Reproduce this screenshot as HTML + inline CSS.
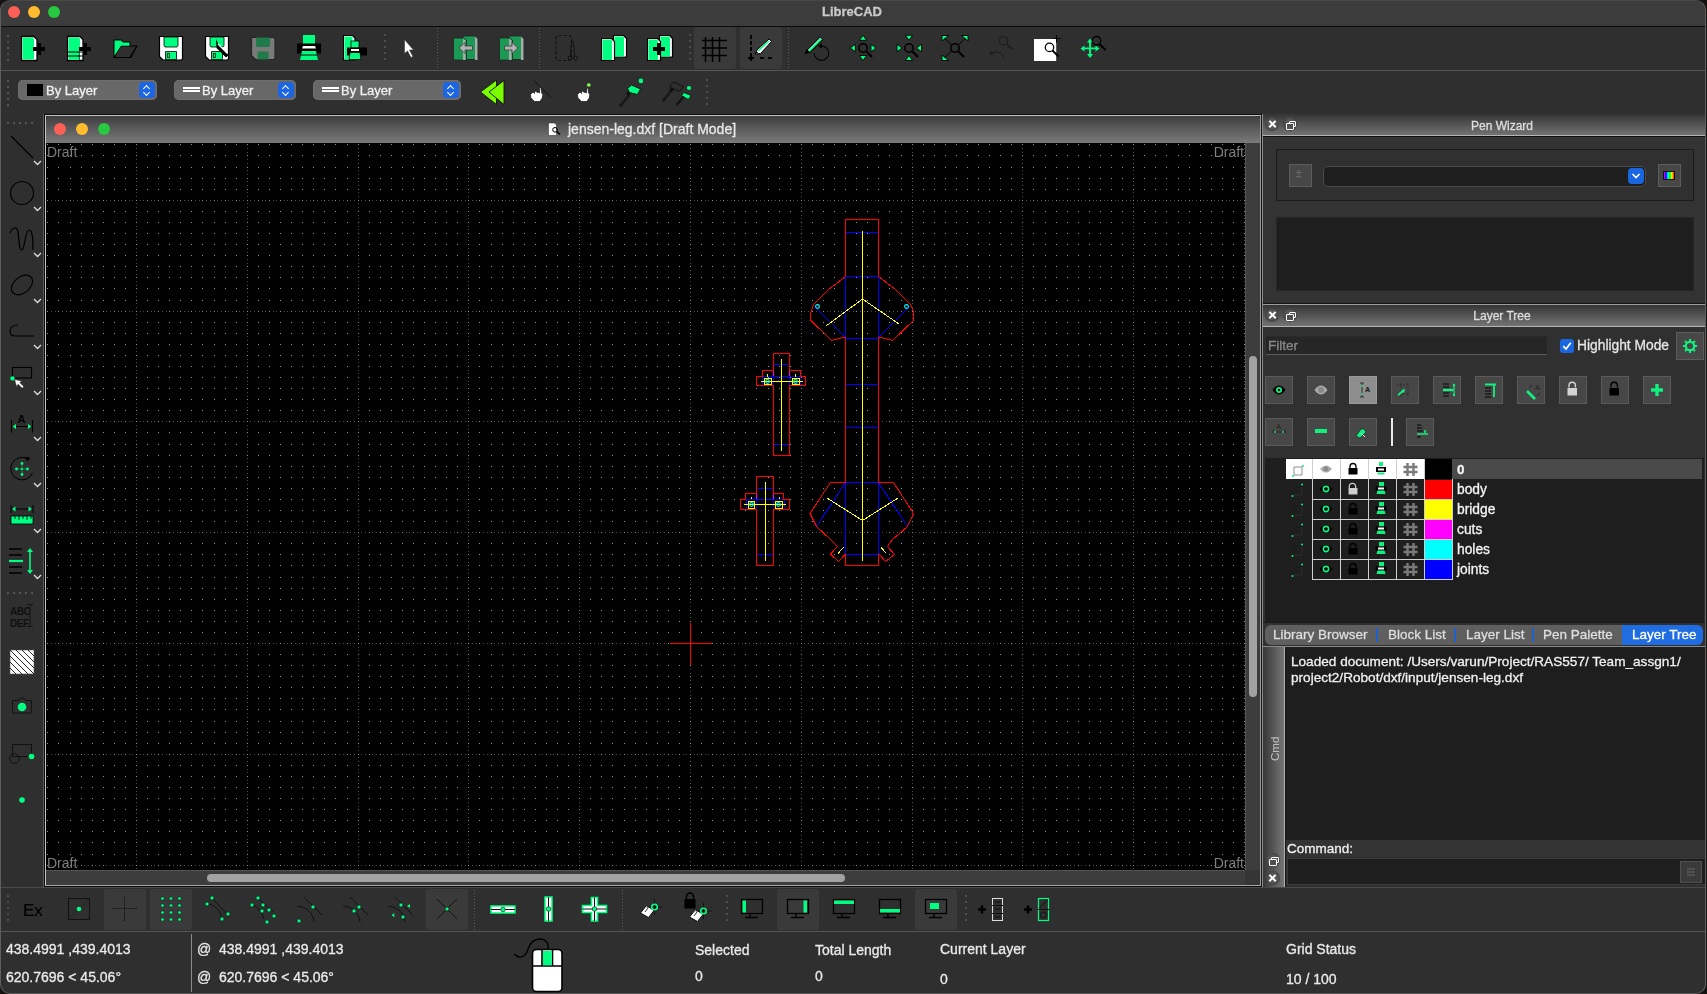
<!DOCTYPE html>
<html><head><meta charset="utf-8">
<style>
*{box-sizing:border-box}
html,body{margin:0;padding:0}
body{width:1707px;height:994px;overflow:hidden;background:#2f2f2f;font-family:"Liberation Sans",sans-serif;position:relative;color:#e6e6e6}
.a{position:absolute}
.t{position:absolute;white-space:nowrap;line-height:1;will-change:transform;-webkit-text-stroke:0.3px}
svg{position:absolute;overflow:visible}
.cb,.fb{width:14px;height:14px;border-radius:50%;background:radial-gradient(circle,#5c5c5c 0,#535353 50%,#3e3e3e 72%,rgba(60,60,60,0) 76%)}
.cb::before,.cb::after{content:"";position:absolute;left:2.5px;top:6px;width:9px;height:2.2px;background:#fff;transform:rotate(45deg)}
.cb::after{transform:rotate(-45deg)}
.fb::before{content:"";position:absolute;left:5.5px;top:3.5px;width:5.5px;height:4.5px;border:1.3px solid #fff;border-radius:1px}
.fb::after{content:"";position:absolute;left:3px;top:6px;width:6px;height:4.8px;border:1.3px solid #fff;background:#505050;border-radius:1px}
.lb{width:28px;height:28px;background:#474747;border:1px solid #5a5a5a}
.cmb{height:20px;background:#686868;border-radius:5px;box-shadow:inset 0 0 0 0.5px #757575}
.stp{width:16px;height:16px;background:#1d66e0;border-radius:4px}
.stp::before{content:"";position:absolute;left:5px;top:3.5px;width:4px;height:4px;border-left:1.5px solid #fff;border-top:1.5px solid #fff;transform:rotate(45deg)}
.stp::after{content:"";position:absolute;left:5px;top:7.5px;width:4px;height:4px;border-right:1.5px solid #fff;border-bottom:1.5px solid #fff;transform:rotate(45deg)}
.st{font-size:14px;color:#eaeaea}

</style></head><body>

<!-- main window title bar -->
<div class="a" style="left:0;top:0;width:1707px;height:26px;background:#3c3c3c;border-radius:10px 10px 0 0"></div>
<div class="a" style="left:0;top:26px;width:1707px;height:1px;background:#0c0c0c"></div>
<div class="a" style="left:8px;top:6px;width:12px;height:12px;border-radius:50%;background:#fe5f57"></div>
<div class="a" style="left:28px;top:6px;width:12px;height:12px;border-radius:50%;background:#febc2e"></div>
<div class="a" style="left:48px;top:6px;width:12px;height:12px;border-radius:50%;background:#28c840"></div>
<div class="t" style="left:822px;top:5px;font-size:13px;font-weight:bold;color:#c9c9c9">LibreCAD</div>

<!--TOP-->
<!-- TOP TOOLBARS -->
<svg style="left:0;top:0" width="1707" height="113" viewBox="0 0 1707 113">
<defs>
<g id="hdl" fill="#555"><rect x="7" y="0" width="2" height="2"/><rect x="7" y="6" width="2" height="2"/><rect x="7" y="12" width="2" height="2"/><rect x="7" y="18" width="2" height="2"/><rect x="7" y="24" width="2" height="2"/></g>
<g id="dsep" fill="#4e4e4e"><rect x="0" y="0" width="2" height="2"/><rect x="0" y="6" width="2" height="2"/><rect x="0" y="12" width="2" height="2"/><rect x="0" y="18" width="2" height="2"/><rect x="0" y="24" width="2" height="2"/></g>
<g id="doc"><path d="M21.5 36.5h12.5l3 3v21h-15.5z" fill="#fff" stroke="#000" stroke-width="1.3"/><path d="M22.5 37.5h10.5l1 1.5v20.5h-11.5z" fill="#00ff80"/></g>
<g id="plus" fill="#000"><rect x="33" y="47" width="12" height="4"/><rect x="38" y="43" width="3" height="12"/></g>
<g id="floppy"><path d="M159.5 36.5h23v22.5l-1 1h-18.5l-3.5-3.5z" fill="#fff" stroke="#000" stroke-width="1.2"/><path d="M164 37h14v8.5l-1 1.5h-12l-1-1.5z" fill="#00ff80" stroke="#000" stroke-width="0.8"/><path d="M165.5 51.5h11v8h-11z" fill="#00ff80" stroke="#000" stroke-width="0.8"/><rect x="167.3" y="53.5" width="2" height="4" fill="none" stroke="#000" stroke-width="0.8"/></g>
<g id="gridic" stroke="#000" stroke-width="1.5"><path d="M702 40.5h25M702 48h25M702 55.5h25M705.5 37v25M712.5 37v25M719.5 37v25"/></g>
</defs>
<use href="#hdl" y="35"/>
<use href="#hdl" y="80"/>
<!-- new -->
<use href="#doc"/><use href="#plus"/>
<!-- new from template -->
<g transform="translate(46 0)"><use href="#doc"/><path d="M22 52h14.5M22 56h14.5M33 52v8" stroke="#000" stroke-width="1"/><path d="M23 53h10v2h-10zM23 57h10v2.8h-10z" fill="#00ff80"/><use href="#plus"/></g>
<!-- open -->
<path d="M113.5 39.5h8l2 2h7v4h7.5l-7 12.5h-17.5z" fill="#000"/><path d="M114.5 40.5h6.5l2 2h6.5v3.3h-8.5l-6.5 10z" fill="#00ff80"/><path d="M121 46.5h15l-6.5 10.5h-14.5z" fill="#2f2f2f"/>
<!-- save -->
<use href="#floppy"/>
<g transform="translate(46 0)"><use href="#floppy"/><path d="M170 39l3 6.5l9.5 9.5l-2.5 2.5l-9.5-9.5z" fill="#000"/><path d="M172 44l9 9" stroke="#fff" stroke-width="1.2"/></g>
<g transform="translate(92 0)" opacity="0.7"><path d="M159.5 37.5h22l1.5 1.5v19.5l-1 1h-18.5l-4-4z" fill="#9a9a9a" stroke="#222" stroke-width="1.2"/><path d="M164 37.5h14v8l-1 1.5h-12l-1-1.5z" fill="#1a9a55"/><path d="M165.5 51.5h11v8h-11z" fill="#1a9a55"/></g>
<!-- print -->
<rect x="303" y="35" width="12" height="9" fill="#00ff80"/><rect x="297" y="43.5" width="24" height="10" fill="#000"/><path d="M303 46h12l1 2.5h-14z" fill="#fff"/><path d="M302 51h14l2 9h-18z" fill="#00ff80"/><path d="M300.5 55h17" stroke="#000" stroke-width="1"/>
<!-- print preview -->
<path d="M343.5 35.5h9l2.5 2.5v22h-11.5z" fill="#fff" stroke="#000" stroke-width="1.2"/><path d="M344.5 36.5h8v23h-8z" fill="#00ff80"/>
<rect x="351" y="41" width="8" height="7" fill="#00ff80" stroke="#000" stroke-width="0.8"/><rect x="347" y="47.5" width="20" height="8" fill="#000"/><path d="M351 49h8v2h-8z" fill="#fff"/><path d="M350 52.5h10l1 7h-12z" fill="#00ff80" stroke="#000" stroke-width="0.8"/>
<use href="#dsep" x="384" y="34"/>
<!-- pointer -->
<path d="M404.5 39.5v14l3-2.5l3.5 6.5l2-1l-3.5-6.5h4z" fill="#fff" stroke="#333" stroke-width="0.6"/>
<path d="M437.5 28v41" stroke="#5a5a5a" stroke-dasharray="1 2"/>
<!-- prev/next window -->
<g><path d="M463 36h12l2.5 2.5v21h-14.5z" fill="#1b9a55" stroke="#222" stroke-width="0.8"/><path d="M475 36.5l2.5 2.5v21h-2.5z" fill="#aaa"/><path d="M453.5 38h10l3 2v20h-13z" fill="#1b9a55" stroke="#222" stroke-width="0.8"/><path d="M463 38.5l2.5 2v19.5h-2.5z" fill="#aaa"/><path d="M459 48l6-5.5v3.5h7.5v4h-7.5v3.5z" fill="#b0b0b0" stroke="#333" stroke-width="0.7"/></g>
<g transform="translate(46 0)"><path d="M463 36h12l2.5 2.5v21h-14.5z" fill="#1b9a55" stroke="#222" stroke-width="0.8"/><path d="M475 36.5l2.5 2.5v21h-2.5z" fill="#aaa"/><path d="M453.5 38h10l3 2v20h-13z" fill="#1b9a55" stroke="#222" stroke-width="0.8"/><path d="M463 38.5l2.5 2v19.5h-2.5z" fill="#aaa"/><path d="M472 48l-6-5.5v3.5h-7.5v4h7.5v3.5z" fill="#b0b0b0" stroke="#333" stroke-width="0.7"/></g>
<path d="M539.5 28v41" stroke="#5a5a5a" stroke-dasharray="1 2"/>
<!-- cut -->
<rect x="556" y="35.5" width="15.5" height="25" rx="3" fill="none" stroke="#111" stroke-width="1.2" stroke-dasharray="3 2"/>
<path d="M572 41l-1.5 9M573 41l1.5 9" stroke="#111" stroke-width="0.9"/><circle cx="570" cy="58" r="2" fill="none" stroke="#111" stroke-width="1"/><circle cx="575.5" cy="58" r="2" fill="none" stroke="#111" stroke-width="1"/><path d="M571 50l-0.5 6M574 50l0.5 6" stroke="#111" stroke-width="0.9"/>
<!-- copy -->
<g><path d="M613.5 35.5h10l3 3v18.5h-13z" fill="#fff" stroke="#000" stroke-width="1.2"/><path d="M614.5 36.5h8.5l1 1.5v18.5h-9.5z" fill="#00ff80"/><path d="M601.5 38.5h10l3 3v19h-13z" fill="#fff" stroke="#000" stroke-width="1.2"/><path d="M602.5 39.5h8.5l1 1.5v19h-9.5z" fill="#00ff80"/></g>
<!-- paste -->
<g transform="translate(46 0)"><path d="M613.5 35.5h10l3 3v18.5h-13z" fill="#fff" stroke="#000" stroke-width="1.2"/><path d="M614.5 36.5h8.5l1 1.5v18.5h-9.5z" fill="#00ff80"/><path d="M601.5 38.5h10l3 3v19h-13z" fill="#fff" stroke="#000" stroke-width="1.2"/><path d="M602.5 39.5h8.5l1 1.5v19h-9.5z" fill="#00ff80"/><rect x="607" y="47" width="12" height="4" fill="#000"/><rect x="611" y="43" width="4" height="12" fill="#000"/></g>
<use href="#dsep" x="689" y="34"/>
<!-- checked grid + draft -->
<rect x="694" y="27" width="42" height="42" rx="3" fill="#3a3a3a"/>
<rect x="740" y="27" width="42" height="42" rx="3" fill="#3a3a3a"/>
<use href="#gridic"/>
<path d="M751 35v25M750 58h5M760 58h4M768 58h6" stroke="#000" stroke-width="1.8" stroke-dasharray="4 2"/>
<path d="M748 58h6M751 55v6" stroke="#000" stroke-width="1.8"/>
<path d="M755 54l2-4l12-11l2.5 2.5l-11 12z" fill="#fff" stroke="#000" stroke-width="1"/><path d="M758 51l11-10" stroke="#00ff80" stroke-width="1.6"/><path d="M755 54l1.5-3l1.5 1.5z" fill="#000"/>
<path d="M788.5 28v41" stroke="#5a5a5a" stroke-dasharray="1 2"/>
<!-- redraw -->
<path d="M814.3 53A7.2 7.2 0 1 0 821.5 46" fill="none" stroke="#000" stroke-width="1.1"/><path d="M818 46l4-2.8v5.6z" fill="#000"/>
<path d="M808.5 51.5l13-13" stroke="#000" stroke-width="4.4"/><path d="M808.8 51.2l12.5-12.5" stroke="#00ff80" stroke-width="2.4"/><path d="M808 50.5l12.5-12.5" stroke="#fff" stroke-width="0.9"/><path d="M804.5 54.5l2-5.5l3.5 3.5z" fill="#000"/>
<!-- zoom in -->
<g stroke="#000" stroke-width="1.6" fill="none"><circle cx="863" cy="48" r="4.2"/><circle cx="909" cy="48" r="4.2"/><circle cx="955" cy="48" r="4.2"/></g>
<path d="M866.5 51.5l5.5 5.5M912.5 51.5l5.5 5.5M958.5 51.5l5.5 5.5" stroke="#000" stroke-width="2.2"/>
<g fill="#00ff80" stroke="#000" stroke-width="0.9" stroke-linejoin="miter">
<path d="M863 35.3l-3.6 5h7.2zM863 60.5l-3.6-5h7.2zM850.3 48l5-3.8v7.6zM876 48l-5-3.8v7.6z"/>
<path d="M909 40.3l-3.6-5h7.2zM909 55.5l-3.6 5h7.2zM902 48l-5-3.8v7.6zM916.5 48l5-3.8v7.6z"/>
<path d="M942 35.5h6.5l-6.5 5.5zM968 35.5h-6.5l6.5 5.5zM942 60.5h6.5l-6.5-5.5z"/>
</g>
<path d="M945 38.5l6.5 6.5M965 38.5l-6.5 6.5M945 57.5l6.5-6.5" stroke="#000" stroke-width="1"/>
<!-- zoom prev -->
<g stroke="#1e1e1e" fill="none"><circle cx="1003.6" cy="40.7" r="4.2" stroke-width="1.1"/><path d="M1006.8 44l5.5 5.5" stroke-width="1.8"/><path d="M1003.4 58.5A7 7 0 0 0 991 54.5" stroke-width="1.1"/></g><path d="M989 55l1.5-4.5l3 3.5z" fill="#1e1e1e"/>
<!-- zoom window -->
<rect x="1034" y="39" width="22.2" height="22" fill="#fff"/><circle cx="1049.5" cy="47.4" r="4.2" fill="none" stroke="#000" stroke-width="1.3"/><path d="M1052.5 50.5l6 6" stroke="#000" stroke-width="2"/><path d="M1056.5 35v7.5M1053 38.5h7.5" stroke="#000" stroke-width="1"/>
<!-- zoom pan -->
<path d="M1090 41v15M1083 48.4h14" stroke="#00ff80" stroke-width="1.8"/><path d="M1090 38.5l-3 4h6zM1090 58l-3-4h6zM1080.5 48.4l4-3v6zM1099.5 48.4l-4-3v6z" fill="#00ff80"/>
<circle cx="1096.5" cy="40.7" r="4.2" fill="none" stroke="#000" stroke-width="1.3"/><path d="M1099.5 44l6 6" stroke="#000" stroke-width="1.9"/>
<!-- row 2 -->
<path d="M0 70.5h1707" stroke="#545454"/>
</svg>
<!-- combos -->
<div class="a cmb" style="left:18px;top:80px;width:139px"></div>
<div class="a" style="left:27px;top:84px;width:16px;height:12px;background:#000"></div>
<div class="t" style="left:46px;top:84px;font-size:13px;color:#f0f0f0">By Layer</div>
<div class="a stp" style="left:139px;top:82px"></div>
<div class="a cmb" style="left:174px;top:80px;width:122px"></div>
<div class="a" style="left:183px;top:87px;width:17px;height:2px;background:#fff"></div><div class="a" style="left:183px;top:90px;width:17px;height:2px;background:#fff"></div>
<div class="t" style="left:202px;top:84px;font-size:13px;color:#f0f0f0">By Layer</div>
<div class="a stp" style="left:278px;top:82px"></div>
<div class="a cmb" style="left:313px;top:80px;width:148px"></div>
<div class="a" style="left:322px;top:87px;width:17px;height:2px;background:#fff"></div><div class="a" style="left:322px;top:90px;width:17px;height:2px;background:#fff"></div>
<div class="t" style="left:341px;top:84px;font-size:13px;color:#f0f0f0">By Layer</div>
<div class="a stp" style="left:443px;top:82px"></div>
<svg style="left:0;top:70px" width="720" height="43" viewBox="0 70 720 43">
<!-- green double arrow -->
<path d="M480.5 92L496.5 80v24.5z" fill="#7cfc00" stroke="#111" stroke-width="0.9" stroke-linejoin="miter"/><path d="M489 92L504 80.5v24z" fill="#7cfc00" stroke="#111" stroke-width="0.9"/>
<!-- hand icons -->
<g id="hand"><path d="M530.5 94.5l2.5-2.5l1.5 1.5v-2.5l2 0.5l0.5 1l1-0.5l1.5 1l0.2-5.5l1.3-0.5l0.6 6l1.2 1.5l-0.5 3.5l-2.5 3.5h-5.5l-3.5-4z" fill="#fff" stroke="#222" stroke-width="0.8" stroke-linejoin="round"/></g>
<path d="M533.3 80.2l17.6 17.1" stroke="#111" stroke-width="1"/>
<use href="#hand" x="47"/><path d="M586.5 89.5l2.3-4" stroke="#111" stroke-width="0.8"/><circle cx="588.8" cy="85" r="2.1" fill="#7cff4a" stroke="#333" stroke-width="0.5"/>
<!-- brush -->
<path d="M620.5 105.5l8.5-10" stroke="#111" stroke-width="2.6" stroke-linecap="round"/><path d="M621.2 104.6l7.5-8.8" stroke="#2f2f2f" stroke-width="0.8"/><path d="M626 94l2-3.5l3 2l-2.5 3z" fill="#111"/>
<path d="M627.5 88.5l4-3.5l9 4l-3 5.5l-8-2z" fill="#00ff80" stroke="#111" stroke-width="0.9"/><circle cx="640.9" cy="80.9" r="2.3" fill="#00ff80"/>
<path d="M663.5 100.5l7-9" stroke="#111" stroke-width="2.4" stroke-linecap="round"/><path d="M664.2 99.6l6-7.8" stroke="#2f2f2f" stroke-width="0.7"/><path d="M669.5 87l4-5l10 4.5l-4 5z" fill="#2f2f2f" stroke="#111" stroke-width="1"/><path d="M669 90l2-2.5l3 2l-2 2.5z" fill="#111"/>
<path d="M677 104.5l6-7" stroke="#111" stroke-width="2.2" stroke-linecap="round"/><path d="M681.5 95.5l2.5-3l7 3l-2.5 4z" fill="#00ff80" stroke="#111" stroke-width="0.8"/><circle cx="689" cy="88" r="2.1" fill="#00ff80"/>
<use href="#dsep" x="706" y="79"/>
</svg>

<!--/TOP-->

<!-- MDI area -->
<div class="a" style="left:43px;top:114px;width:1px;height:773px;background:#5a5a5a"></div>
<div class="a" style="left:44px;top:114px;width:1218px;height:773px;background:#0c0c0c"></div>
<!-- MDI window -->
<div class="a" style="left:45px;top:115px;width:1216px;height:771px;background:#2c2c2c;border:1px solid #c4c4c4;border-right-color:#9a9a9a;border-bottom-color:#a4a4a4"></div>
<div class="a" style="left:46px;top:116px;width:1214px;height:27px;background:linear-gradient(#3e3e3e,#7a7a7a);border-radius:4px 4px 0 0"></div>
<div class="a" style="left:54px;top:123px;width:12px;height:12px;border-radius:50%;background:#fe5f57"></div>
<div class="a" style="left:76px;top:123px;width:12px;height:12px;border-radius:50%;background:#febc2e"></div>
<div class="a" style="left:98px;top:123px;width:12px;height:12px;border-radius:50%;background:#28c840"></div>
<div class="t" style="left:568px;top:122px;font-size:14px;color:#e8e8e8">jensen-leg.dxf [Draft Mode]</div>
<svg style="left:546px;top:121px" width="20" height="18" viewBox="546 121 20 18"><path d="M548.5 123h6l2 2v10.5h-8z" fill="#fff" stroke="#222" stroke-width="0.5"/><circle cx="555" cy="129.8" r="2.3" fill="none" stroke="#000" stroke-width="1"/><path d="M556.6 131.5l3.5 3" stroke="#000" stroke-width="1.6"/></svg>

<!-- canvas -->
<div class="a" id="canvas" style="left:46px;top:143px;width:1199px;height:727px;background:#000;overflow:hidden"></div>
<!--GRID-->
<svg class="a" style="left:46px;top:143px" width="1199" height="727" viewBox="46 143 1199 727" shape-rendering="crispEdges">
<defs><path id="gr" d="M47 0h1m10 0h1m11 0h1m10 0h1m10 0h1m10 0h1m10 0h1m10 0h1m10 0h1m10 0h1m10 0h1m10 0h1m10 0h1m10 0h1m10 0h1m11 0h1m10 0h1m10 0h1m10 0h1m10 0h1m10 0h1m10 0h1m10 0h1m10 0h1m10 0h1m10 0h1m10 0h1m11 0h1m10 0h1m10 0h1m10 0h1m10 0h1m10 0h1m10 0h1m10 0h1m10 0h1m10 0h1m10 0h1m10 0h1m10 0h1m11 0h1m10 0h1m10 0h1m10 0h1m10 0h1m10 0h1m10 0h1m10 0h1m10 0h1m10 0h1m10 0h1m10 0h1m11 0h1m10 0h1m10 0h1m10 0h1m10 0h1m10 0h1m10 0h1m10 0h1m10 0h1m10 0h1m10 0h1m10 0h1m10 0h1m11 0h1m10 0h1m10 0h1m10 0h1m10 0h1m10 0h1m10 0h1m10 0h1m10 0h1m10 0h1m10 0h1m10 0h1m11 0h1m10 0h1m10 0h1m10 0h1m10 0h1m10 0h1m10 0h1m10 0h1m10 0h1m10 0h1m10 0h1m10 0h1m10 0h1m11 0h1m10 0h1m10 0h1m10 0h1m10 0h1m10 0h1m10 0h1m10 0h1m10 0h1m10 0h1m10 0h1m10 0h1m11 0h1m10 0h1m10 0h1m10 0h1m10 0h1m10 0h1m10 0h1" stroke="#959595" stroke-width="1"/>
<path id="sr" d="M51 0h1m3 0h1m6 0h1m3 0h1m6 0h1m3 0h1m6 0h1m3 0h1m6 0h1m3 0h1m6 0h1m3 0h1m7 0h1m2 0h1m7 0h1m2 0h1m7 0h1m2 0h1m7 0h1m2 0h1m7 0h1m3 0h1m6 0h1m3 0h1m6 0h1m3 0h1m6 0h1m3 0h1m6 0h1m3 0h1m6 0h1m3 0h1m6 0h1m3 0h1m6 0h1m3 0h1m6 0h1m3 0h1m7 0h1m2 0h1m7 0h1m2 0h1m7 0h1m2 0h1m7 0h1m3 0h1m6 0h1m3 0h1m6 0h1m3 0h1m6 0h1m3 0h1m6 0h1m3 0h1m6 0h1m3 0h1m6 0h1m3 0h1m6 0h1m3 0h1m6 0h1m3 0h1m7 0h1m2 0h1m7 0h1m2 0h1m7 0h1m2 0h1m7 0h1m2 0h1m7 0h1m3 0h1m6 0h1m3 0h1m6 0h1m3 0h1m6 0h1m3 0h1m6 0h1m3 0h1m6 0h1m3 0h1m6 0h1m3 0h1m6 0h1m3 0h1m6 0h1m3 0h1m7 0h1m2 0h1m7 0h1m2 0h1m7 0h1m2 0h1m7 0h1m3 0h1m6 0h1m3 0h1m6 0h1m3 0h1m6 0h1m3 0h1m6 0h1m3 0h1m6 0h1m3 0h1m6 0h1m3 0h1m6 0h1m3 0h1m6 0h1m3 0h1m7 0h1m2 0h1m7 0h1m2 0h1m7 0h1m2 0h1m7 0h1m2 0h1m7 0h1m3 0h1m6 0h1m3 0h1m6 0h1m3 0h1m6 0h1m3 0h1m6 0h1m3 0h1m6 0h1m3 0h1m6 0h1m3 0h1m6 0h1m3 0h1m6 0h1m3 0h1m7 0h1m2 0h1m7 0h1m2 0h1m7 0h1m2 0h1m7 0h1m3 0h1m6 0h1m3 0h1m6 0h1m3 0h1m6 0h1m3 0h1m6 0h1m3 0h1m6 0h1m3 0h1m6 0h1m3 0h1m6 0h1m3 0h1m6 0h1m3 0h1m7 0h1m2 0h1m7 0h1m2 0h1m7 0h1m2 0h1m7 0h1m2 0h1m7 0h1m3 0h1m6 0h1m3 0h1m6 0h1m3 0h1m6 0h1m3 0h1m6 0h1m3 0h1m6 0h1m3 0h1m6 0h1m3 0h1m6 0h1m3 0h1m6 0h1m3 0h1m7 0h1m2 0h1m7 0h1m2 0h1m7 0h1m2 0h1m7 0h1m3 0h1m6 0h1m3 0h1m6 0h1m3 0h1m6 0h1m3 0h1m6 0h1m3 0h1m6 0h1m3 0h1m6 0h1m3 0h1m6 0h1m3 0h1m6 0h1m3 0h1m7 0h1m2 0h1m7 0h1m2 0h1" stroke="#4a4a4a" stroke-width="1"/>
<path id="sc" d="M0 148v1m0 3v1m0 6v1m0 3v1m0 6v1m0 3v1m0 6v1m0 3v1m0 6v1m0 3v1m0 6v1m0 3v1m0 7v1m0 2v1m0 7v1m0 2v1m0 7v1m0 2v1m0 7v1m0 3v1m0 6v1m0 3v1m0 6v1m0 3v1m0 6v1m0 3v1m0 6v1m0 3v1m0 6v1m0 3v1m0 6v1m0 3v1m0 6v1m0 3v1m0 6v1m0 3v1m0 7v1m0 2v1m0 7v1m0 2v1m0 7v1m0 2v1m0 7v1m0 2v1m0 7v1m0 3v1m0 6v1m0 3v1m0 6v1m0 3v1m0 6v1m0 3v1m0 6v1m0 3v1m0 6v1m0 3v1m0 6v1m0 3v1m0 6v1m0 3v1m0 6v1m0 3v1m0 7v1m0 2v1m0 7v1m0 2v1m0 7v1m0 2v1m0 7v1m0 3v1m0 6v1m0 3v1m0 6v1m0 3v1m0 6v1m0 3v1m0 6v1m0 3v1m0 6v1m0 3v1m0 6v1m0 3v1m0 6v1m0 3v1m0 6v1m0 3v1m0 7v1m0 2v1m0 7v1m0 2v1m0 7v1m0 2v1m0 7v1m0 2v1m0 7v1m0 3v1m0 6v1m0 3v1m0 6v1m0 3v1m0 6v1m0 3v1m0 6v1m0 3v1m0 6v1m0 3v1m0 6v1m0 3v1m0 6v1m0 3v1m0 6v1m0 3v1m0 7v1m0 2v1m0 7v1m0 2v1m0 7v1m0 2v1m0 7v1m0 3v1m0 6v1m0 3v1m0 6v1m0 3v1m0 6v1m0 3v1m0 6v1m0 3v1m0 6v1m0 3v1m0 6v1" stroke="#4a4a4a" stroke-width="1"/></defs>
<use href="#sr" y="200.5"/>
<use href="#sr" y="311.5"/>
<use href="#sr" y="421.5"/>
<use href="#sr" y="532.5"/>
<use href="#sr" y="643.5"/>
<use href="#sr" y="754.5"/>
<use href="#sr" y="865.5"/>
<use href="#sc" x="136.5"/>
<use href="#sc" x="247.5"/>
<use href="#sc" x="358.5"/>
<use href="#sc" x="468.5"/>
<use href="#sc" x="579.5"/>
<use href="#sc" x="690.5"/>
<use href="#sc" x="801.5"/>
<use href="#sc" x="912.5"/>
<use href="#sc" x="1022.5"/>
<use href="#sc" x="1133.5"/>
<use href="#sc" x="1244.5"/>
<use href="#gr" y="144.5"/>
<use href="#gr" y="155.5"/>
<use href="#gr" y="167.5"/>
<use href="#gr" y="178.5"/>
<use href="#gr" y="189.5"/>
<use href="#gr" y="200.5"/>
<use href="#gr" y="211.5"/>
<use href="#gr" y="222.5"/>
<use href="#gr" y="233.5"/>
<use href="#gr" y="244.5"/>
<use href="#gr" y="255.5"/>
<use href="#gr" y="266.5"/>
<use href="#gr" y="277.5"/>
<use href="#gr" y="288.5"/>
<use href="#gr" y="300.5"/>
<use href="#gr" y="311.5"/>
<use href="#gr" y="322.5"/>
<use href="#gr" y="333.5"/>
<use href="#gr" y="344.5"/>
<use href="#gr" y="355.5"/>
<use href="#gr" y="366.5"/>
<use href="#gr" y="377.5"/>
<use href="#gr" y="388.5"/>
<use href="#gr" y="399.5"/>
<use href="#gr" y="410.5"/>
<use href="#gr" y="421.5"/>
<use href="#gr" y="432.5"/>
<use href="#gr" y="444.5"/>
<use href="#gr" y="455.5"/>
<use href="#gr" y="466.5"/>
<use href="#gr" y="477.5"/>
<use href="#gr" y="488.5"/>
<use href="#gr" y="499.5"/>
<use href="#gr" y="510.5"/>
<use href="#gr" y="521.5"/>
<use href="#gr" y="532.5"/>
<use href="#gr" y="543.5"/>
<use href="#gr" y="554.5"/>
<use href="#gr" y="565.5"/>
<use href="#gr" y="577.5"/>
<use href="#gr" y="588.5"/>
<use href="#gr" y="599.5"/>
<use href="#gr" y="610.5"/>
<use href="#gr" y="621.5"/>
<use href="#gr" y="632.5"/>
<use href="#gr" y="643.5"/>
<use href="#gr" y="654.5"/>
<use href="#gr" y="665.5"/>
<use href="#gr" y="676.5"/>
<use href="#gr" y="687.5"/>
<use href="#gr" y="698.5"/>
<use href="#gr" y="709.5"/>
<use href="#gr" y="721.5"/>
<use href="#gr" y="732.5"/>
<use href="#gr" y="743.5"/>
<use href="#gr" y="754.5"/>
<use href="#gr" y="765.5"/>
<use href="#gr" y="776.5"/>
<use href="#gr" y="787.5"/>
<use href="#gr" y="798.5"/>
<use href="#gr" y="809.5"/>
<use href="#gr" y="820.5"/>
<use href="#gr" y="831.5"/>
<use href="#gr" y="842.5"/>
<use href="#gr" y="854.5"/>
<use href="#gr" y="865.5"/>
</svg>
<!--/GRID-->
<!--DRAW-->
<svg class="a" style="left:46px;top:143px;will-change:transform" width="1199" height="727" viewBox="46 143 1199 727" fill="none" stroke-width="1" shape-rendering="crispEdges">
<text x="47" y="157" font-family="Liberation Sans" font-size="14" fill="#7e7e7e" stroke="none">Draft</text>
<text x="1244" y="157" text-anchor="end" font-family="Liberation Sans" font-size="14" fill="#7e7e7e" stroke="none">Draft</text>
<text x="47" y="868" font-family="Liberation Sans" font-size="14" fill="#7e7e7e" stroke="none">Draft</text>
<text x="1244" y="868" text-anchor="end" font-family="Liberation Sans" font-size="14" fill="#7e7e7e" stroke="none">Draft</text>
<!-- origin -->
<path d="M690.5 623V665M670 643.5H712" stroke="#ff0000"/>
<!-- big leg -->
<g stroke="#0000ff">
<path d="M846 232.5H878M845.5 276.5H878.5M845.5 338.5H878.5M846 384.5H878M846 427.5H878M845.5 482.5H878.5M845.5 554.5H878.5"/>
<path d="M845.5 276.5V338.5M878.5 276.5V338.5M845.5 482.5V554.5M878.5 482.5V554.5"/>
<path d="M813.5 305.5L845.5 337.5M910.5 305.5L878.5 337.5M845.5 482.5L816.5 526.5M878.5 482.5L907.5 526.5"/>
</g>
<g stroke="#ff0000">
<path d="M845.5 276.5V219.5H878.5V276.5L896 290L910.5 304.5L913.5 312L914 320L892.5 340.5L881.5 337.5L878.5 338V482.5H893.5L913.5 513.5L907.5 526.5L892 540L887.5 546.5L894.5 554.5L885.5 561.5L879.5 554.5H878.5V565.5H845.5V554.5H845L838.5 561.5L830.5 554L837.5 546.5L831 540L816.5 526.5L810 513.5L830.5 482.5H845.5V338L842.5 337.5L831.5 340.5L810.5 320L811 312L813.5 304.5L828 290Z"/>
</g>
<g stroke="#ffff00">
<path d="M862.5 231V561"/>
<path d="M826 326L862.5 299L899 324M827 498L862.5 520.5L898 498M838 553.5L843.5 547.5M881 547.5L886.5 553.5"/>
</g>
<g stroke="#00ffff" shape-rendering="auto" stroke-width="1.1">
<circle cx="817.5" cy="306.5" r="1.9"/><circle cx="906.5" cy="306.5" r="1.9"/>
</g>
<!-- small piece 1 -->
<g stroke="#0000ff">
<path d="M774 364.5H790M774 444.5H790M762.5 376.5H800.5M762.5 376.5V386M800.5 376.5V386M773.5 376V386M789.5 376V386"/>
</g>
<g stroke="#ff0000">
<path d="M773.5 370.5V353.5H789.5V370.5H800.5V376.5H805.5V385.5H789.5V455.5H773.5V385.5H756.5V376.5H762.5V370.5Z"/>
</g>
<g stroke="#ff00ff"><path d="M773.5 371V376M789.5 371V376"/></g>
<g stroke="#ffff00">
<path d="M781.5 359V451M761 381.5H803M767.5 374V377M795.5 374V377"/>
<rect x="764.5" y="378.5" width="7" height="6"/><rect x="792.5" y="378.5" width="7" height="6"/>
</g>
<g stroke="#00ffff" shape-rendering="auto" stroke-width="1.1"><circle cx="767.5" cy="381.5" r="1.9"/><circle cx="795.5" cy="381.5" r="1.9"/></g>
<!-- small piece 2 -->
<g stroke="#0000ff">
<path d="M757 488.5H773M757 554.5H773M745.5 499.5H784.5M746.5 499.5V509M784.5 499.5V509M756.5 499V509M773.5 499V509"/>
</g>
<g stroke="#ff0000">
<path d="M756.5 493.5V476.5H773.5V493.5H783.5V499.5H789.5V509.5H773.5V565.5H756.5V509.5H740.5V499.5H745.5V493.5Z"/>
</g>
<g stroke="#ff00ff"><path d="M756.5 494V499M773.5 494V499"/></g>
<g stroke="#ffff00">
<path d="M765.5 482V561M744 504.5H786M751.5 497V499M779.5 497V499"/>
<rect x="748.5" y="501.5" width="6" height="7"/><rect x="775.5" y="501.5" width="7" height="7"/>
</g>
<g stroke="#00ffff" shape-rendering="auto" stroke-width="1.1"><circle cx="751.5" cy="504.5" r="1.9"/><circle cx="778.5" cy="504.5" r="1.9"/></g>
</svg>

<!--/DRAW-->
<!-- scrollbars -->
<div class="a" style="left:1245px;top:143px;width:15px;height:727px;background:#3d3d3d;border-left:1px solid #545454"></div>
<div class="a" style="left:1249px;top:356px;width:8px;height:341px;background:#a2a2a2;border-radius:4px"></div>
<div class="a" style="left:46px;top:870px;width:1199px;height:15px;background:#3d3d3d;border-top:1px solid #545454"></div>
<div class="a" style="left:207px;top:874px;width:638px;height:8px;background:#a2a2a2;border-radius:4px"></div>
<div class="a" style="left:1245px;top:870px;width:15px;height:15px;background:#353535"></div>

<!--LEFT-->
<!-- LEFT TOOLBAR -->
<div class="a" style="left:0;top:113px;width:43px;height:774px;background:#2f2f2f"></div>
<svg style="left:0;top:113px" width="43" height="774" viewBox="0 113 43 774">
<defs><path id="chev" d="M34 161l3.5 3.5l3.5-3.5" fill="none" stroke="#ddd" stroke-width="1.3"/></defs>
<g fill="#555"><rect x="7" y="122" width="2" height="2"/><rect x="13" y="122" width="2" height="2"/><rect x="19" y="122" width="2" height="2"/><rect x="25" y="122" width="2" height="2"/><rect x="31" y="122" width="2" height="2"/></g>
<g fill="#555"><rect x="7" y="592" width="2" height="2"/><rect x="13" y="592" width="2" height="2"/><rect x="19" y="592" width="2" height="2"/><rect x="25" y="592" width="2" height="2"/><rect x="31" y="592" width="2" height="2"/></g>
<use href="#chev"/><use href="#chev" y="46"/><use href="#chev" y="92"/><use href="#chev" y="138"/><use href="#chev" y="184"/><use href="#chev" y="230"/><use href="#chev" y="276"/><use href="#chev" y="322"/><use href="#chev" y="368"/><use href="#chev" y="414"/>
<!-- line -->
<path d="M11 136l22 22" stroke="#000" stroke-width="1.2"/>
<!-- circle -->
<circle cx="22" cy="193" r="11.5" fill="none" stroke="#000" stroke-width="1.2"/>
<!-- spline -->
<path d="M10 233C12 227 17 226 18 232S19 251 22 250S25 230 29 230S33 240 33 250" fill="none" stroke="#000" stroke-width="1.2"/>
<!-- ellipse -->
<ellipse cx="22" cy="285" rx="12" ry="8" transform="rotate(-40 22 285)" fill="none" stroke="#000" stroke-width="1.2"/>
<!-- polyline J -->
<path d="M18 325c-5 0-8 2-8 6c0 3 2 5 5 5h19" fill="none" stroke="#000" stroke-width="1.2"/>
<!-- rect select -->
<rect x="12.5" y="367.5" width="19" height="10.5" fill="none" stroke="#000" stroke-width="1.1"/>
<circle cx="12.5" cy="378.4" r="2.2" fill="#00ff80"/><path d="M14.5 379.5l7.5 1.5l-2.2 1.6l4 4l-1.6 1.6l-4-4l-1.6 2.2z" fill="#fff" stroke="#222" stroke-width="0.5"/>
<!-- dimension A -->
<path d="M11.5 420v12.5M32.5 420v12.5M12 426.5h20" stroke="#000" stroke-width="1.1"/><path d="M12.5 426.5l3.5-2.5v5zM31.5 426.5l-3.5-2.5v5z" fill="#00ff80"/>
<text x="17.5" y="423" font-family="Liberation Sans" font-weight="bold" font-size="11" fill="#000">A</text>
<!-- modify move/rotate -->
<path d="M28 459A11.3 11.3 0 1 0 32.5 473" fill="none" stroke="#000" stroke-width="1"/><path d="M25.5 456.5l5 1.5l-3.5 3.5z" fill="#000"/>
<path d="M22 463.5v11M16.5 469h11" stroke="#0a8a4a" stroke-width="1"/><g fill="#00ff80"><circle cx="22" cy="463.5" r="1.4"/><circle cx="22" cy="474.5" r="1.4"/><circle cx="16.5" cy="469" r="1.4"/><circle cx="27.5" cy="469" r="1.4"/><circle cx="22" cy="469" r="1.1"/></g>
<!-- measure -->
<path d="M11 505v8M33 505v8M12 509h20" stroke="#000" stroke-width="1"/><path d="M12 509l3.5-2.5v5zM32 509l-3.5-2.5v5z" fill="#00ff80"/>
<rect x="11" y="516" width="22" height="8" fill="#00ff80" stroke="#000" stroke-width="0.8"/><path d="M15 516v3M19 516v4M23 516v3M27 516v4M31 516v3" stroke="#000" stroke-width="0.8"/>
<!-- info lines -->
<path d="M9 549h13M9 555h13M9 567h13M9 573h13" stroke="#000" stroke-width="1.6"/><path d="M9 561h14" stroke="#00ff80" stroke-width="2.2"/><path d="M30 550v22" stroke="#00ff80" stroke-width="1.6"/><path d="M30 548l-3 4h6zM30 574l-3-4h6z" fill="#00ff80"/>
<!-- ABC DEF -->
<text x="10" y="615" font-family="Liberation Sans" font-weight="bold" font-size="10" fill="#111" letter-spacing="-0.5">ABC</text>
<text x="10" y="626.5" font-family="Liberation Sans" font-weight="bold" font-size="10" fill="#111" letter-spacing="-0.5">DEF</text>
<path d="M27 604.5h6M30 604.5v22M27 626.5h6" fill="none" stroke="#111" stroke-width="0.9"/>
<!-- hatch -->
<rect x="10" y="650" width="24" height="24" fill="#fff" stroke="#555" stroke-width="0.6"/>
<path d="M10 656l18 18M10 662l12 12M10 668l6 6M10 650l24 24M16 650l18 18M22 650l12 12M28 650l6 6" stroke="#111" stroke-width="0.9"/>
<!-- image -->
<path d="M12.5 700.5h6l2-2.5h3l2 2.5h6v12.5h-19z" fill="none" stroke="#111" stroke-width="0.9"/><circle cx="22" cy="707" r="4.3" fill="#00ff80"/>
<!-- block -->
<rect x="12.5" y="744.5" width="19" height="12" fill="none" stroke="#111" stroke-width="1"/><circle cx="14.5" cy="758.5" r="4.8" fill="none" stroke="#111" stroke-width="1"/><circle cx="31.5" cy="756.5" r="2.8" fill="#00ff80"/>
<!-- point -->
<circle cx="22" cy="800" r="2.8" fill="#00ff80"/>
</svg>

<!--/LEFT-->
<!--BOTTOM-->
<!-- BOTTOM TOOLBAR -->
<div class="a" style="left:0;top:887px;width:1707px;height:1px;background:#4a4a4a"></div>
<div class="a" style="left:0;top:888px;width:1707px;height:43px;background:#2f2f2f"></div>
<div class="a" style="left:0;top:931px;width:1707px;height:1px;background:#555"></div>
<svg style="left:0;top:887px" width="1707" height="45" viewBox="0 887 1707 45">
<defs><g id="dsep2" fill="#4e4e4e"><rect x="0" y="0" width="2" height="2"/><rect x="0" y="6" width="2" height="2"/><rect x="0" y="12" width="2" height="2"/><rect x="0" y="18" width="2" height="2"/><rect x="0" y="24" width="2" height="2"/></g>
<circle id="gd" r="2" fill="#00ff80" stroke="#111" stroke-width="0.6"/></defs>
<use href="#dsep2" x="7" y="895"/>

<rect x="68.5" y="898.5" width="21" height="21" fill="none" stroke="#111" stroke-width="1"/><path d="M69 919l20-20" stroke="#111" stroke-width="0.6" stroke-dasharray="1.5 1"/><circle cx="79" cy="909" r="2.3" fill="#00ff80"/>
<rect x="104" y="889" width="42" height="41" rx="3" fill="#3a3a3a"/>
<rect x="150" y="889" width="42" height="41" rx="3" fill="#3a3a3a"/>
<rect x="426" y="889" width="42" height="41" rx="3" fill="#3a3a3a"/>
<rect x="777" y="889" width="42" height="41" rx="3" fill="#3a3a3a"/>
<rect x="915" y="889" width="42" height="41" rx="3" fill="#3a3a3a"/>
<path d="M113 908.5h24M124.5 897v24" stroke="#111" stroke-width="1" stroke-dasharray="1.5 1"/>
<g fill="#00ff80" stroke="#111" stroke-width="0.5"><circle cx="162.5" cy="898.5" r="1.7"/><circle cx="171" cy="898.5" r="1.7"/><circle cx="179.5" cy="898.5" r="1.7"/><circle cx="162.5" cy="905.5" r="1.7"/><circle cx="171" cy="905.5" r="1.7"/><circle cx="179.5" cy="905.5" r="1.7"/><circle cx="162.5" cy="912.5" r="1.7"/><circle cx="171" cy="912.5" r="1.7"/><circle cx="179.5" cy="912.5" r="1.7"/><circle cx="162.5" cy="919.5" r="1.7"/><circle cx="171" cy="919.5" r="1.7"/><circle cx="179.5" cy="919.5" r="1.7"/></g>
<!-- endpoints -->
<path d="M213 899l14 15M207 904c6 0 12 4 15 14" fill="none" stroke="#111" stroke-width="1"/><use href="#gd" x="212" y="898"/><use href="#gd" x="207" y="904"/><use href="#gd" x="228" y="914"/><use href="#gd" x="222" y="919"/>
<!-- middle points -->
<path d="M252 905c5 1 9 5 12 14M258 898l15 14" fill="none" stroke="#111" stroke-width="1"/><use href="#gd" x="258" y="898"/><use href="#gd" x="252" y="905"/><use href="#gd" x="263" y="905"/><use href="#gd" x="262" y="911"/><use href="#gd" x="269" y="910"/><use href="#gd" x="274" y="916"/><use href="#gd" x="267" y="922"/>
<!-- distance -->
<path d="M304 897l18 18M297 906c10 1 16 7 17 16" fill="none" stroke="#111" stroke-width="1"/><use href="#gd" x="313" y="907"/><use href="#gd" x="299" y="921"/>
<!-- center -->
<path d="M350 897l18 18M343 906c10 1 16 7 17 16" fill="none" stroke="#111" stroke-width="1"/><use href="#gd" x="359" y="907"/><use href="#gd" x="354" y="911"/>
<!-- intersection -->
<path d="M395 897l18 18M388 906c10 1 16 7 17 16" fill="none" stroke="#111" stroke-width="1"/><use href="#gd" x="401" y="905"/><use href="#gd" x="403" y="917"/><path d="M394 913l-2.5 2.5l3 1.5zM410 904l-3 2l3 2z" fill="#00ff80"/>
<!-- intersection manual X -->
<path d="M437 899l20 20M457 899l-20 20" stroke="#111" stroke-width="1"/><use href="#gd" x="447" y="909"/>
<path d="M474.5 890v40" stroke="#5a5a5a" stroke-dasharray="1 2"/>
<!-- restrict horiz -->
<rect x="491" y="906" width="24" height="7" fill="#fff" stroke="#00ff80" stroke-width="1.5"/><path d="M491 909.5h24" stroke="#111" stroke-width="1"/><circle cx="503" cy="909.5" r="2.3" fill="#00ff80" stroke="#111" stroke-width="0.6"/>
<!-- restrict vert -->
<rect x="545" y="897" width="7" height="24" fill="#fff" stroke="#00ff80" stroke-width="1.5"/><path d="M548.5 897v24" stroke="#111" stroke-width="1"/><circle cx="548.5" cy="909" r="2.3" fill="#00ff80" stroke="#111" stroke-width="0.6"/>
<!-- restrict ortho -->
<path d="M591.5 897.5h6v8h9v7h-9v8.5h-6v-8.5h-9v-7h9z" fill="#fff" stroke="#00ff80" stroke-width="1.6"/><path d="M582.5 909h24M594.5 897.5v23.5" stroke="#111" stroke-width="1"/><circle cx="594.5" cy="909" r="2.3" fill="#00ff80" stroke="#111" stroke-width="0.6"/>
<path d="M622.5 890v40" stroke="#5a5a5a" stroke-dasharray="1 2"/>
<!-- rel zero -->
<path d="M640.5 913l6-7.5l7.5 5l-5.5 7z" fill="#fff" stroke="#111" stroke-width="1"/><path d="M645 912l3-4" stroke="#333" stroke-width="1"/>
<path d="M654.5 899v16M646.5 907h16" stroke="#111" stroke-width="0.9"/><circle cx="654.5" cy="907" r="2.8" fill="none" stroke="#00ff80" stroke-width="1.6"/>
<!-- lock rel zero -->
<path d="M686.5 899v-2.5a3.5 3.5 0 0 1 7 0v2.5" fill="none" stroke="#000" stroke-width="1.4"/><rect x="684.5" y="899" width="11" height="9.5" fill="#000"/>
<path d="M689.5 917l6-7.5l7.5 5l-5.5 7z" fill="#fff" stroke="#111" stroke-width="1"/><path d="M694 916l3-4" stroke="#333" stroke-width="1"/>
<path d="M703.5 903v16M695.5 911h16" stroke="#111" stroke-width="0.9"/><circle cx="703.5" cy="911" r="2.8" fill="none" stroke="#00ff80" stroke-width="1.6"/>
<use href="#dsep2" x="726" y="895"/>
<!-- monitors -->
<g id="mon"><rect x="741.5" y="899.5" width="21" height="14" fill="none" stroke="#000" stroke-width="1.3"/><path d="M750 914v3M745 917.5h13" stroke="#000" stroke-width="1.4"/></g>
<rect x="742.5" y="900.5" width="3.5" height="12" fill="#00ff80"/>
<use href="#mon" x="46"/><rect x="803.5" y="900.5" width="3.5" height="12" fill="#00ff80"/>
<use href="#mon" x="92"/><rect x="834" y="900.5" width="20" height="3.5" fill="#00ff80"/>
<use href="#mon" x="138"/><rect x="880" y="909" width="20" height="3.5" fill="#00ff80"/>
<use href="#mon" x="184"/><rect x="930" y="903" width="9" height="6" fill="#00ff80"/>
<use href="#dsep2" x="965" y="895"/>
<!-- add widgets -->
<path d="M978 909.5h8M982 905.5v8" stroke="#000" stroke-width="2.6"/><rect x="992.5" y="898.5" width="10" height="22" fill="none" stroke="#ddd" stroke-width="1"/><path d="M992 905.5h11M992 913.5h11M994.5 902h6M994.5 909h6M994.5 917h6" stroke="#111" stroke-width="1"/>
<path d="M1024 909.5h8M1028 905.5v8" stroke="#000" stroke-width="2.6"/><rect x="1038.5" y="898.5" width="10" height="22" fill="none" stroke="#00ff80" stroke-width="1.2"/><path d="M1038 909.5h11M1039 908l9-8" stroke="#111" stroke-width="1"/><circle cx="1043.5" cy="915" r="3" fill="none" stroke="#111" stroke-width="1"/>
</svg>
<div class="t" style="left:23px;top:901.5px;font-size:17px;color:#000;-webkit-text-stroke:0.2px #000">Ex</div>
<!-- STATUS BAR -->
<div class="a" style="left:0;top:932px;width:1707px;height:62px;background:#2f2f2f;border-radius:0 0 10px 10px"></div>
<div class="a" style="left:191px;top:934px;width:1px;height:58px;background:#8a8a8a"></div>
<div class="t st" style="left:6px;top:942px">438.4991 ,439.4013</div>
<div class="t st" style="left:6px;top:970px">620.7696 &lt; 45.06°</div>
<div class="t st" style="left:197px;top:942px">@&nbsp;&nbsp;438.4991 ,439.4013</div>
<div class="t st" style="left:197px;top:970px">@&nbsp;&nbsp;620.7696 &lt; 45.06°</div>
<svg style="left:510px;top:935px" width="60" height="59" viewBox="510 935 60 59">
<path d="M548 949c1-7-3-10-8-10c-6 0-10 4-12 10c-1 5-5 9-9 8c-2-1-4-2-5-3" fill="none" stroke="#000" stroke-width="1.4"/>
<rect x="532.5" y="949.5" width="29.5" height="42" rx="4" fill="#fff" stroke="#000" stroke-width="1.6"/>
<path d="M532 966h30M542 949.5v16.5M552.5 949.5v16.5" stroke="#000" stroke-width="1.6"/>
<rect x="543" y="951" width="8.7" height="14.2" fill="#00ff80"/>
</svg>
<div class="t st" style="left:695px;top:943px">Selected</div>
<div class="t st" style="left:695px;top:969px">0</div>
<div class="t st" style="left:815px;top:943px">Total Length</div>
<div class="t st" style="left:815px;top:969px">0</div>
<div class="t st" style="left:940px;top:942px">Current Layer</div>
<div class="t st" style="left:940px;top:972px">0</div>
<div class="t st" style="left:1286px;top:942px">Grid Status</div>
<div class="t st" style="left:1286px;top:972px">10 / 100</div>

<!--/BOTTOM-->

<!--DOCK-->
<!-- RIGHT DOCK -->
<div class="a" style="left:1261px;top:113px;width:1px;height:774px;background:#151515"></div>
<div class="a" style="left:1262px;top:114px;width:445px;height:773px;background:#2f2f2f;border-left:1px solid #8a8a8a"></div>
<!-- Pen Wizard title -->
<div class="a" style="left:1263px;top:113px;width:444px;height:22px;background:linear-gradient(#2e2e2e,#3a3a3a 12%,#727272)"></div>
<div class="a" style="left:1263px;top:135px;width:444px;height:1px;background:#b4b4b4"></div>
<div class="t" style="left:1263px;width:478px;text-align:center;top:119.5px;font-size:12px;color:#dedede">Pen Wizard</div>
<div class="a cb" style="left:1265px;top:117px"></div><div class="a fb" style="left:1283px;top:117px"></div>
<!-- Pen wizard content -->
<div class="a" style="left:1263px;top:136px;width:444px;height:168px;background:#333333"></div>
<div class="a" style="left:1263px;top:136px;width:444px;height:1px;background:#101010"></div>
<div class="a" style="left:1276px;top:149px;width:418px;height:52px;background:#303030;border:1px solid #1c1c1c"></div>
<div class="a" style="left:1289px;top:164px;width:23px;height:23px;background:#474747;border:1px solid #5c5c5c"></div>
<div class="t" style="left:1296px;top:169px;font-size:10px;color:#6a6a6a">±</div>
<div class="a" style="left:1323px;top:166px;width:323px;height:21px;background:#1e1e1e;border:1px solid #4a4a4a;border-radius:5px"></div>
<div class="a" style="left:1628px;top:168px;width:16px;height:16px;background:#1a66e0;border-radius:4px"></div>
<svg style="left:1631px;top:172px" width="10" height="8"><path d="M1.5 2L5 5.5L8.5 2" stroke="#fff" stroke-width="1.6" fill="none"/></svg>
<div class="a" style="left:1658px;top:164px;width:23px;height:23px;background:#474747;border:1px solid #5c5c5c"></div>
<div class="a" style="left:1663px;top:171px;width:12px;height:9px;background:linear-gradient(90deg,#f0f,#00f,#0ff,#0f0,#ff0,#f00);border:1px solid #111"></div>
<div class="a" style="left:1276px;top:217px;width:418px;height:74px;background:#1e1e1e;border:1px solid #262626"></div>
<div class="a" style="left:1263px;top:303px;width:444px;height:1px;background:#141414"></div>
<!-- Layer Tree title -->
<div class="a" style="left:1263px;top:304px;width:444px;height:1px;background:#9c9c9c"></div>
<div class="a" style="left:1263px;top:305px;width:444px;height:21px;background:linear-gradient(#363636,#737373)"></div>
<div class="a" style="left:1263px;top:326px;width:444px;height:1px;background:#b4b4b4"></div>
<div class="t" style="left:1263px;width:478px;text-align:center;top:310.3px;font-size:12px;color:#dedede">Layer Tree</div>
<div class="a cb" style="left:1265px;top:308px"></div><div class="a fb" style="left:1283px;top:308px"></div>
<div class="a" style="left:1263px;top:327px;width:444px;height:319px;background:#303030"></div>
<!-- filter -->
<div class="a" style="left:1266px;top:336px;width:281px;height:19px;background:#262626;border-bottom:1px solid #5a5a5a;border-top:1px solid #2a2a2a"></div>
<div class="t" style="left:1268px;top:339px;font-size:13.5px;color:#8a8a8a">Filter</div>
<div class="a" style="left:1560px;top:339px;width:14px;height:14px;background:#1a66e0;border-radius:3px"></div>
<svg style="left:1560px;top:339px" width="14" height="14"><path d="M3.3 7.2L6 10L10.8 3.8" stroke="#fff" stroke-width="1.8" fill="none"/></svg>
<div class="t" style="left:1577px;top:339px;font-size:13.8px;color:#e4e4e4">Highlight Mode</div>
<div class="a" style="left:1676px;top:332px;width:28px;height:28px;background:#474747;border:1px solid #5c5c5c"></div>
<svg style="left:1682px;top:338px" width="16" height="16" viewBox="0 0 16 16"><g fill="none" stroke="#12f07e" stroke-width="2.2"><circle cx="8" cy="8" r="4.2"/><path d="M8 1v2.5M8 12.5V15M1 8h2.5M12.5 8H15M3 3l1.8 1.8M11.2 11.2L13 13M3 13l1.8-1.8M11.2 4.8L13 3" stroke-width="2"/></g><circle cx="8" cy="8" r="2" fill="#474747"/></svg>
<!-- layer tree tool buttons -->
<div class="a lb" style="left:1265px;top:376px"></div>
<div class="a lb" style="left:1307px;top:376px"></div>
<div class="a lb" style="left:1349px;top:376px;background:#8e8e8e;border-color:#9a9a9a"></div>
<div class="a lb" style="left:1391px;top:376px"></div>
<div class="a lb" style="left:1433px;top:376px"></div>
<div class="a lb" style="left:1475px;top:376px"></div>
<div class="a lb" style="left:1517px;top:376px"></div>
<div class="a lb" style="left:1559px;top:376px"></div>
<div class="a lb" style="left:1601px;top:376px"></div>
<div class="a lb" style="left:1643px;top:376px"></div>
<div class="a lb" style="left:1265px;top:418px"></div>
<div class="a lb" style="left:1307px;top:418px"></div>
<div class="a lb" style="left:1349px;top:418px"></div>
<div class="a" style="left:1391px;top:418px;width:2px;height:28px;background:#e8e8e8"></div>
<div class="a lb" style="left:1406px;top:418px"></div>
<svg style="left:1265px;top:376px" width="420" height="70" viewBox="0 0 420 70">
<!-- eye -->
<path d="M7.5 14C10 10.5 12 9.5 14 9.5S18 10.5 20.5 14C18 17.5 16 18.5 14 18.5S10 17.5 7.5 14Z" fill="#000"/>
<circle cx="14" cy="14" r="3" fill="#12f07e"/><circle cx="14" cy="14" r="1.2" fill="#000"/>
<!-- gray eye -->
<path d="M49.5 14C52 10.5 54 9.5 56 9.5S60 10.5 62.5 14C60 17.5 58 18.5 56 18.5S52 17.5 49.5 14Z" fill="#aaa"/>
<circle cx="56" cy="14" r="3" fill="#888"/>
<!-- I A -->
<path d="M95 7h4M97 7v14M95 21h4" stroke="#333" stroke-width="1"/><circle cx="97" cy="10" r="1" fill="#12f07e"/><circle cx="97" cy="18" r="1" fill="#12f07e"/>
<text x="100" y="15.5" font-family="Liberation Sans" font-weight="bold" font-size="7" fill="#111">A</text>
<!-- dotted sq arrow -->
<path d="M132 9h12M132 18h12M136 7v14M143 7v14" stroke="#222" stroke-width="0.8" stroke-dasharray="1.5 1.5"/>
<path d="M133 19l5-4" stroke="#12f07e" stroke-width="2"/><path d="M136 14l4-1-1 4z" fill="#12f07e"/>
<!-- lines + green bar -->
<path d="M178 8h6M178 11h6M178 17h6M178 20h6" stroke="#1a1a1a" stroke-width="1.6"/><path d="M178 14h10" stroke="#12f07e" stroke-width="2.4"/><path d="M189 9v10" stroke="#12f07e" stroke-width="1.2"/><circle cx="189" cy="9" r="1.2" fill="#12f07e"/><circle cx="189" cy="19" r="1.2" fill="#12f07e"/>
<!-- lines + T -->
<path d="M220 12h6M220 15h6M220 18h6M220 21h6" stroke="#1a1a1a" stroke-width="1.6"/><path d="M220 8.5h11M229 9v12" stroke="#12f07e" stroke-width="1.8"/>
<!-- diag ruler -->
<path d="M262 15l8 8" stroke="#12f07e" stroke-width="2.6"/><path d="M264 12l3-3M275 17l-3 3" stroke="#222" stroke-width="1"/>
<text x="270" y="14" font-family="Liberation Sans" font-size="7" fill="#222">A</text>
<!-- locks -->
<path d="M304 11.5v-2a3.2 3.2 0 0 1 6.4 0v2" stroke="#d4d4d4" stroke-width="1.4" fill="none"/><rect x="302.5" y="12" width="9.5" height="7.5" fill="#d4d4d4"/>
<path d="M346 11.5v-2a3.2 3.2 0 0 1 6.4 0v2" stroke="#000" stroke-width="1.4" fill="none"/><rect x="344.5" y="12" width="9.5" height="7.5" fill="#000"/>
<!-- plus -->
<path d="M386 14h12M392 8v12" stroke="#12f07e" stroke-width="3.4"/>
<!-- row2 -->
<path d="M8 57v-3M20 57v-3M8 56h12" stroke="#222" stroke-width="0.9"/><circle cx="10" cy="56" r="0.9" fill="#12f07e"/><circle cx="18" cy="56" r="0.9" fill="#12f07e"/>
<text x="11.5" y="53" font-family="Liberation Sans" font-size="6.5" fill="#222">A</text>
<rect x="50" y="53" width="12" height="4" fill="#12f07e"/>
<path d="M91 60l5-7 3 0 2 3-6 6z" fill="#12f07e" stroke="#111" stroke-width="0.6"/><path d="M96 57l4 4" stroke="#ddd" stroke-width="1"/>
<path d="M152 49h4M152 52h5M152 55h6M152 61h4" stroke="#1a1a1a" stroke-width="1.5"/><path d="M152 58h11M160 54v3" stroke="#12f07e" stroke-width="1.6"/>
</svg>
<!-- layer list -->
<div class="a" style="left:1265px;top:458px;width:439px;height:164px;background:#1e1e1e"></div>
<div class="a" style="left:1286px;top:459px;width:139px;height:20px;background:#fff"></div>
<div class="a" style="left:1425px;top:459px;width:27px;height:20px;background:#000"></div>
<div class="a" style="left:1452px;top:459px;width:250px;height:20px;background:#4a4a4a"></div>
<div class="t" style="left:1457px;top:463px;font-size:13.5px;font-weight:bold;color:#f4f4f4">0</div>
<div class="a" style="left:1312px;top:479px;width:141px;height:101px;border:1px solid #cfcfcf;border-top:none"></div>
<div class="a" style="left:1340px;top:459px;width:1px;height:121px;background:#cfcfcf"></div>
<div class="a" style="left:1368px;top:459px;width:1px;height:121px;background:#cfcfcf"></div>
<div class="a" style="left:1396px;top:459px;width:1px;height:121px;background:#cfcfcf"></div>
<div class="a" style="left:1424px;top:459px;width:1px;height:121px;background:#cfcfcf"></div>
<div class="a" style="left:1312px;top:459px;width:1px;height:20px;background:#cfcfcf"></div>
<div class="a" style="left:1313px;top:499px;width:139px;height:1px;background:#cfcfcf"></div>
<div class="a" style="left:1313px;top:519px;width:139px;height:1px;background:#cfcfcf"></div>
<div class="a" style="left:1313px;top:539px;width:139px;height:1px;background:#cfcfcf"></div>
<div class="a" style="left:1313px;top:559px;width:139px;height:1px;background:#cfcfcf"></div>
<div class="a" style="left:1425px;top:480px;width:27px;height:19px;background:#f00"></div>
<div class="a" style="left:1425px;top:500px;width:27px;height:19px;background:#ff0"></div>
<div class="a" style="left:1425px;top:520px;width:27px;height:19px;background:#f0f"></div>
<div class="a" style="left:1425px;top:540px;width:27px;height:19px;background:#0ff"></div>
<div class="a" style="left:1425px;top:560px;width:27px;height:19px;background:#00f"></div>
<div class="t" style="left:1457px;top:483px;font-size:13.8px;color:#f4f4f4">body</div>
<div class="t" style="left:1457px;top:503px;font-size:13.8px;color:#f4f4f4">bridge</div>
<div class="t" style="left:1457px;top:523px;font-size:13.8px;color:#f4f4f4">cuts</div>
<div class="t" style="left:1457px;top:543px;font-size:13.8px;color:#f4f4f4">holes</div>
<div class="t" style="left:1457px;top:563px;font-size:13.8px;color:#f4f4f4">joints</div>
<svg style="left:1286px;top:459px" width="140" height="121" viewBox="0 0 140 121">
<defs>
<g id="rowic">
<path d="M8 16V8h8" stroke="#1a1a1a" stroke-width="0.8" fill="none"/><path d="M8 16h8V8" stroke="#333" stroke-width="0.8" fill="none"/>
<circle cx="6.5" cy="17" r="1" fill="#12f07e"/><circle cx="16" cy="5.5" r="1" fill="#12f07e"/>
<path d="M33.5 10C36 6.8 38 6.3 40 6.3S44 6.8 46.5 10C44 13.2 42 13.7 40 13.7S36 13.2 33.5 10Z" fill="#000"/><circle cx="40" cy="10" r="2.6" fill="none" stroke="#12f07e" stroke-width="1.6"/>
<path d="M64 9v-1.5a3 3 0 0 1 6 0v1.5" stroke="#000" stroke-width="1.3" fill="none"/><rect x="62.5" y="9" width="9" height="6.5" fill="#000"/>
<rect x="93" y="3" width="5" height="4.5" fill="#12f07e"/><rect x="89.5" y="7.5" width="11" height="4" fill="#000"/><rect x="92" y="8.5" width="6" height="2" fill="#fff"/><path d="M91.5 11.5h7l1 3.5h-9z" fill="#12f07e"/>
<path d="M121.5 4v13M127.5 4v13M117.5 8h14M117.5 13h14" stroke="#7a7a7a" stroke-width="2.4"/>
</g>
</defs>
<!-- row0 icons -->
<path d="M8 16V8h8v8z" stroke="#777" stroke-width="0.8" fill="none"/><circle cx="7" cy="17" r="1.1" fill="#12f07e"/><circle cx="17" cy="7" r="1.1" fill="#12f07e"/>
<path d="M34 10C36.5 7 38.5 6.5 40 6.5S43.5 7 46 10C43.5 13 41.5 13.5 40 13.5S36.5 13 34 10Z" fill="#b0b0b0"/><circle cx="40" cy="10" r="2.5" fill="#8a8a8a"/>
<path d="M64 9v-1.5a3 3 0 0 1 6 0v1.5" stroke="#000" stroke-width="1.3" fill="none"/><rect x="62.5" y="9" width="9" height="6.5" fill="#000"/>
<rect x="93" y="3" width="4" height="4" fill="#12f07e"/><rect x="90" y="8" width="10" height="5" fill="#000"/><rect x="92" y="9.5" width="6" height="2" fill="#fff"/><path d="M91.5 13.5h7v2h-7z" fill="#12f07e"/>
<path d="M121.5 4v13M127.5 4v13M117.5 8h14M117.5 13h14" stroke="#7a7a7a" stroke-width="2.4"/>
<use href="#rowic" y="20"/>
<use href="#rowic" y="40"/>
<use href="#rowic" y="60"/>
<use href="#rowic" y="80"/>
<use href="#rowic" y="100"/>
<path d="M63.3 29v-1.5a3.2 3.2 0 0 1 6.4 0v1.5" stroke="#d0d0d0" stroke-width="1.3" fill="none"/><rect x="62.5" y="29" width="9" height="6.5" fill="#d0d0d0"/>
</svg>
<div class="a" style="left:1263px;top:622px;width:444px;height:1px;background:#1a1a1a"></div>
<!-- tabs -->
<div class="a" style="left:1265px;top:625px;width:438px;height:20px;background:#5f5f5f;border-radius:6px"></div>
<div class="a" style="left:1622px;top:625px;width:81px;height:20px;background:#1f6de0;border-radius:0 6px 6px 0"></div>
<div class="a" style="left:1376px;top:628px;width:2px;height:14px;background:#1f5fc8"></div>
<div class="a" style="left:1454px;top:628px;width:2px;height:14px;background:#1f5fc8"></div>
<div class="a" style="left:1532px;top:628px;width:2px;height:14px;background:#1f5fc8"></div>
<div class="t" style="left:1273px;top:628px;font-size:13.5px;color:#dedede">Library Browser</div>
<div class="t" style="left:1388px;top:628px;font-size:13.5px;color:#dedede">Block List</div>
<div class="t" style="left:1466px;top:628px;font-size:13.5px;color:#dedede">Layer List</div>
<div class="t" style="left:1543px;top:628px;font-size:13.5px;color:#dedede">Pen Palette</div>
<div class="t" style="left:1632px;top:628px;font-size:13.5px;color:#fff">Layer Tree</div>
<div class="a" style="left:1263px;top:646px;width:444px;height:1px;background:#8a8a8a"></div>
<!-- Cmd dock -->
<div class="a" style="left:1263px;top:647px;width:21px;height:240px;background:linear-gradient(90deg,#363636,#767676)"></div>
<div class="a" style="left:1284px;top:647px;width:1px;height:240px;background:#b0b0b0"></div><div class="a" style="left:1285px;top:647px;width:1px;height:240px;background:#151515"></div>
<div class="t" style="left:1269.5px;top:761px;font-size:11.5px;color:#c4c4c4;-webkit-text-stroke:0;transform:rotate(-90deg);transform-origin:0 0">Cmd</div>
<div class="a fb" style="left:1265.5px;top:853px"></div><div class="a cb" style="left:1265.5px;top:871px"></div>
<div class="a" style="left:1286px;top:647px;width:421px;height:193px;background:#1e1e1e"></div>
<div class="t" style="left:1291px;top:654px;font-size:13.6px;line-height:15.7px;color:#f0f0f0">Loaded document: /Users/varun/Project/RAS557/ Team_assgn1/<br>project2/Robot/dxf/input/jensen-leg.dxf</div>
<div class="a" style="left:1286px;top:840px;width:421px;height:17px;background:#333"></div>
<div class="t" style="left:1287px;top:842px;font-size:13.5px;color:#f0f0f0">Command:</div>
<div class="a" style="left:1287px;top:858px;width:419px;height:27px;background:#1e1e1e;border:1px solid #3a3a3a"></div>
<div class="a" style="left:1680px;top:861px;width:22px;height:22px;background:#3a3a3a;border:1px solid #505050"></div>
<svg style="left:1686px;top:867px" width="10" height="10"><path d="M1 2h8M1 5h8M1 8h8" stroke="#666" stroke-width="1"/></svg>

<!--/DOCK-->
<div class="a" style="left:0;top:0;width:1706px;height:994px;border:1px solid #5e5e5e;border-top-color:rgba(94,94,94,0.35);border-bottom-color:#555;border-radius:10px;box-shadow:0 0 0 30px #15120f;pointer-events:none"></div>
</body></html>
